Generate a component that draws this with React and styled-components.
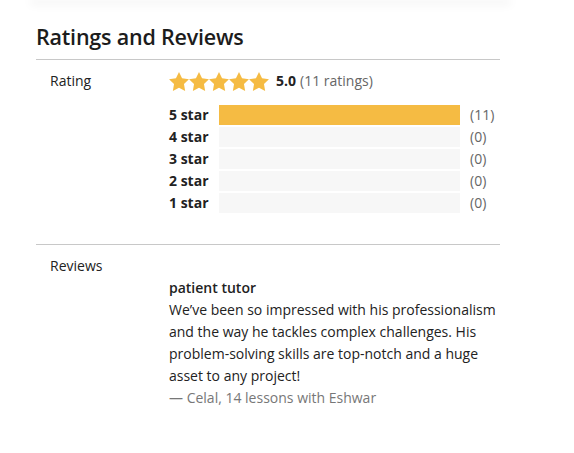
import React from "react";
import styled, { createGlobalStyle } from "styled-components";

const GlobalStyle = createGlobalStyle`
  html, body {
    margin: 0;
    padding: 0;
    background: #ffffff;
  }
  body {
    font-family: "Open Sans", "Liberation Sans", sans-serif;
    color: #222;
  }
`;

const Page = styled.div`
  width: 574px;
  min-height: 453px;
  background: #fff;
`;

const CardEdge = styled.div`
  height: 0;
  margin: 0 66px 0 33px;
  box-shadow: 0 2px 10px 3px rgba(0, 0, 0, 0.05);
`;

const Section = styled.section`
  width: 464px;
  margin-left: 36px;
  padding-top: 22px;
`;

const Heading = styled.h2`
  margin: 0;
  font-family: "Open Sans", "Liberation Sans", sans-serif;
  font-weight: 600;
  font-size: 21.5px;
  line-height: 29px;
  letter-spacing: -0.2px;
  color: #1c1c1c;
  padding-bottom: 8px;
  border-bottom: 1px solid #c8c8c8;
`;

const Row = styled.div`
  display: grid;
  grid-template-columns: 119px 1fr;
  padding: ${(p) => p.$pad};
  padding-left: 14px;
  border-bottom: ${(p) => (p.$divider ? "1px solid #c8c8c8" : "none")};
  font-size: 14px;
  line-height: 22px;
`;

const Label = styled.div`
  color: #222;
`;

const Summary = styled.div`
  display: flex;
  align-items: center;
  height: 22px;
  margin-bottom: 12px;
  color: #666;
`;

const Stars = styled.div`
  display: flex;
  gap: 0;
  margin-right: 7px;
`;

const Score = styled.b`
  color: #222;
  font-weight: 700;
  margin-right: 4px;
`;

const Breakdown = styled.div`
  display: flex;
  flex-direction: column;
  gap: 2px;
`;

const BarRow = styled.div`
  display: grid;
  grid-template-columns: 50px 241px auto;
  align-items: center;
  height: 20px;
`;

const BarName = styled.span`
  font-weight: 700;
  color: #222;
`;

const Track = styled.div`
  height: 20px;
  background: #f7f7f7;
`;

const Fill = styled.div`
  height: 100%;
  background: #f5bb43;
`;

const Count = styled.span`
  margin-left: 10px;
  color: #666;
`;

const Review = styled.div`
  padding-top: 22px;
`;

const ReviewTitle = styled.div`
  font-weight: 600;
  color: #222;
`;

const ReviewBody = styled.p`
  margin: 0;
  color: #222;
`;

const ReviewMeta = styled.div`
  color: #777;
`;

function Star() {
  return (
    <svg width="20" height="19" viewBox="2 2 20 19.1" aria-hidden="true">
      <path
        d="M12 2l3.09 6.26L22 9.27l-5 4.87 1.18 6.88L12 17.770l-6.18 3.25L7 14.14 2 9.27l6.91-1.01L12 2z"
        fill="#f5bb43"
      />
    </svg>
  );
}

const breakdown = [
  { stars: 5, count: 11 },
  { stars: 4, count: 0 },
  { stars: 3, count: 0 },
  { stars: 2, count: 0 },
  { stars: 1, count: 0 },
];

export default function App() {
  const total = breakdown.reduce((s, b) => s + b.count, 0);
  return (
    <Page>
      <GlobalStyle />
      <CardEdge />
      <Section>
        <Heading>Ratings and Reviews</Heading>
        <Row $pad="10px 0 32px" $divider>
          <Label>Rating</Label>
          <div>
            <Summary>
              <Stars>
                {[0, 1, 2, 3, 4].map((i) => (
                  <Star key={i} />
                ))}
              </Stars>
              <Score>5.0</Score>
              (11 ratings)
            </Summary>
            <Breakdown>
              {breakdown.map((b) => (
                <BarRow key={b.stars}>
                  <BarName>{b.stars} star</BarName>
                  <Track>
                    <Fill style={{ width: `${total ? (b.count / total) * 100 : 0}%` }} />
                  </Track>
                  <Count>({b.count})</Count>
                </BarRow>
              ))}
            </Breakdown>
          </div>
        </Row>
        <Row $pad="10px 0 20px">
          <Label>Reviews</Label>
          <Review>
            <ReviewTitle>patient tutor</ReviewTitle>
            <ReviewBody>
              We’ve been so impressed with his professionalism and the way he
              tackles complex challenges. His problem-solving skills are
              top-notch and a huge asset to any project!
            </ReviewBody>
            <ReviewMeta>— Celal, 14 lessons with Eshwar</ReviewMeta>
          </Review>
        </Row>
      </Section>
    </Page>
  );
}
